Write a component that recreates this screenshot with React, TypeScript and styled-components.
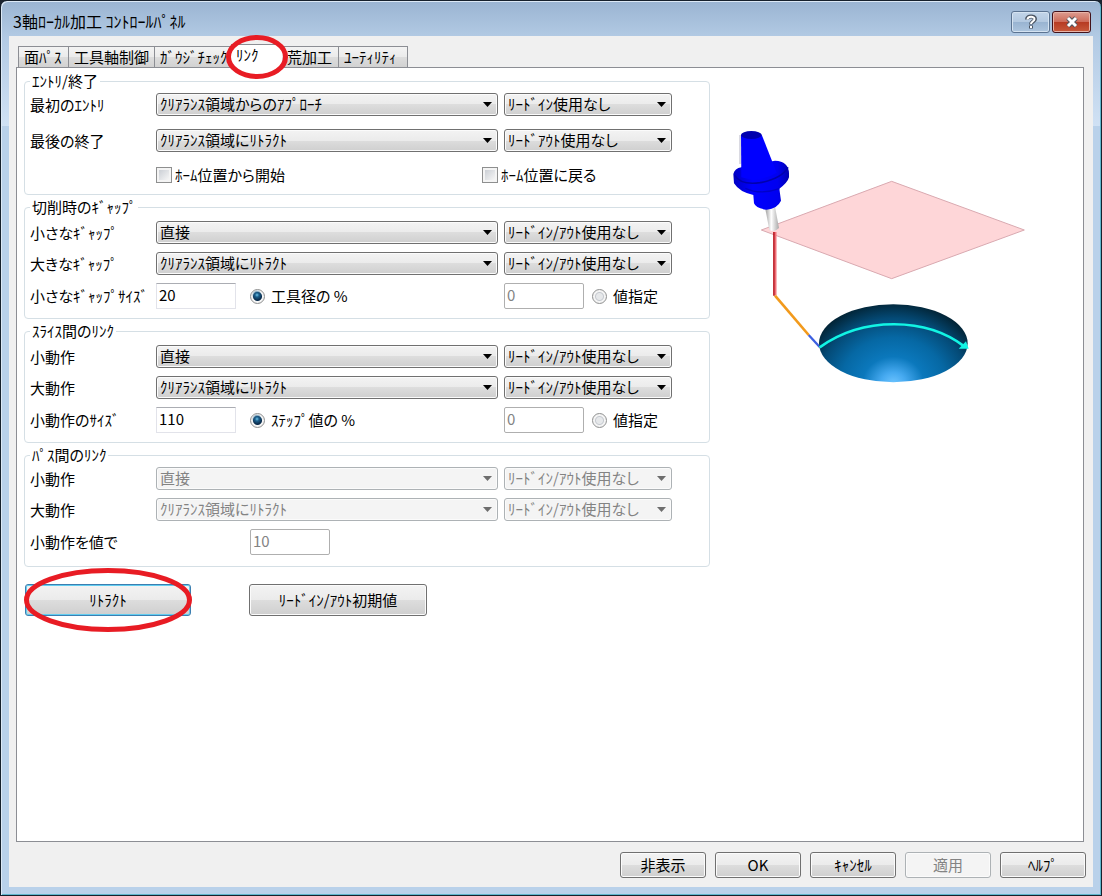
import React from "react";
import styled, { createGlobalStyle, css } from "styled-components";

const GlobalStyle = createGlobalStyle`
  *, *::before, *::after { box-sizing: border-box; }
  body { margin: 0; background: #1b2430; }
  body, button, input, select {
    font-family: "Noto Sans CJK JP", "Liberation Sans", sans-serif;
    font-size: 15px;
    line-height: 20px;
    font-feature-settings: "palt";
    color: #000;
  }
`;

const glossy = css`
  background: linear-gradient(#f3f3f3, #ebebeb 50%, #dddddd 50%, #cfcfcf);
  border: 1px solid #707070;
  border-radius: 3px;
  box-shadow: inset 0 0 0 1px #fbfbfb;
`;

const disabledLook = css`
  background: #f4f4f4;
  border-color: #adb2b5;
  color: #838383;
  opacity: 1;
`;

const Window = styled.div`
  display: flex;
  flex-direction: column;
  min-height: 100vh;
  padding: 0 8px 8px;
  border: 1px solid #16202c;
  border-radius: 7px 7px 0 0;
  background: linear-gradient(#9ab4d2, #b2cae4 36px, #d0e1f4 125px, #b9d1ea 125px);
  box-shadow: inset 1px 1px 0 #dce9f6, inset -1px -1px 0 #5fb6cc;
`;

const TitleBar = styled.header`
  display: flex;
  align-items: center;
  height: 35px;
  padding: 4px 2px 0 4px;
`;

const Title = styled.h1`
  flex: 1;
  margin: 0;
  font-size: 16px;
  font-weight: 400;
`;

const Captions = styled.div`
  display: flex;
  gap: 2px;
  padding-top: 2px;
`;

const CaptionButton = styled.button<{ $close?: boolean }>`
  display: grid;
  place-items: center;
  width: 39px;
  height: 22px;
  padding: 0;
  border: 1px solid ${(p) => (p.$close ? "#43121a" : "#5b7391")};
  border-radius: 3px;
  background: ${(p) =>
    p.$close
      ? "linear-gradient(#dc9c90, #cd6a58 50%, #b63a22 50%, #c85a3c)"
      : "linear-gradient(#c3d5e9, #b2c8e0 50%, #98b3d1 50%, #adc5de)"};
  box-shadow: inset 0 0 0 1px ${(p) => (p.$close ? "#e8b4a8" : "#d5e3f1")};
`;

const Client = styled.main`
  display: flex;
  flex: 1;
  flex-direction: column;
  padding: 8px 7px 9px;
  background: #f0f0f0;
`;

const Tabs = styled.div`
  display: flex;
  align-items: flex-end;
  padding-left: 2px;
`;

const Tab = styled.button<{ $width: number; $active?: boolean }>`
  position: relative;
  width: ${(p) => p.$width}px;
  height: ${(p) => (p.$active ? 24 : 21)}px;
  margin-bottom: ${(p) => (p.$active ? -1 : 0)}px;
  z-index: ${(p) => (p.$active ? 1 : 0)};
  padding: 0 0 ${(p) => (p.$active ? 3 : 0)}px 5px;
  border: 1px solid #8c8e94;
  border-width: 1px ${(p) => (p.$active ? 0 : 1)}px 0 0;
  background: ${(p) => (p.$active ? "#fff" : "linear-gradient(#f3f3f3, #ebebeb 50%, #dddddd 50%, #d2d2d2)")};
  text-align: left;
  white-space: nowrap;
  &:first-child { border-left-width: 1px; }
`;

const Ring = styled.svg`
  position: absolute;
  left: 50%;
  top: 50%;
  transform: translate(-50%, -50%);
  overflow: visible;
  pointer-events: none;
`;

const Page = styled.section`
  display: flex;
  flex: 1;
  align-items: flex-start;
  margin-right: 2px;
  padding: 3px 7px;
  border: 1px solid #8c8e94;
  background: #fff;
`;

const Form = styled.form`
  display: flex;
  flex: 0 1 686px;
  flex-direction: column;
  gap: 2px;
  min-width: 0;
`;

const Group = styled.fieldset<{ $top: number; $bottom: number }>`
  min-width: 0;
  margin: 0;
  padding: ${(p) => p.$top}px 37px ${(p) => p.$bottom}px 5px;
  border: 1px solid #d5dfe5;
  border-radius: 4px;
`;

const Legend = styled.legend`
  height: 20px;
  padding: 0 2px;
`;

const Rows = styled.div<{ $gap: number }>`
  display: grid;
  grid-template-columns: 120px 342fr 168fr;
  align-items: center;
  gap: ${(p) => p.$gap}px 6px;
`;

const Label = styled.label`
  white-space: nowrap;
`;

const Combo = styled.span`
  display: block;
  position: relative;
  min-width: 0;
`;

const Select = styled.select`
  ${glossy}
  display: block;
  appearance: none;
  width: 100%;
  height: 23px;
  padding: 0 20px 2px 3px;
  &:disabled { ${disabledLook} }
`;

const Arrow = styled.svg<{ $disabled?: boolean }>`
  position: absolute;
  right: 6px;
  top: 9px;
  fill: ${(p) => (p.$disabled ? "#6d6d6d" : "#000")};
  pointer-events: none;
`;

const Field = styled.input`
  width: 80px;
  height: 26px;
  padding: 0 2px 4px;
  border: 1px solid #e2e3ea;
  border-top-color: #abadb3;
  background: #fff;
  &:disabled {
    border-color: #afafaf;
    border-radius: 2px;
    color: #838383;
  }
`;

const ValueCell = styled.div<{ $gap?: number; $indent?: number }>`
  display: flex;
  align-items: center;
  gap: ${(p) => p.$gap ?? 0}px;
  padding-left: ${(p) => p.$indent ?? 0}px;
`;

const Choice = styled.label<{ $gap: number }>`
  display: flex;
  align-items: center;
  gap: ${(p) => p.$gap}px;
  white-space: nowrap;
`;

const CheckRow = styled.div`
  display: grid;
  grid-column: 2 / 4;
  grid-template-columns: 326fr 190fr;
  height: 18px;
`;

const CheckBox = styled.input`
  appearance: none;
  width: 16px;
  height: 16px;
  margin: 0;
  border: 1px solid #8e8f8f;
  background: linear-gradient(135deg, #cbcfd5, #f6f6f6) content-box, #f4f4f4;
  padding: 2px;
`;

const Radio = styled.input`
  appearance: none;
  width: 15px;
  height: 15px;
  margin: 0;
  border: 1px solid #8e8f8f;
  border-radius: 50%;
  background: radial-gradient(circle, #e6e8ea 3px, #c6cad0 4px, #f4f4f4 5px);
  &:checked {
    background: radial-gradient(circle at 6px 5px, #6fc3e8 0, #1b5f8c 2px, transparent 5px),
      radial-gradient(circle, #0b2c4c 4px, #f4f4f4 5px);
  }
`;

const Actions = styled.div`
  display: flex;
  gap: 58px;
  padding: 15px 0 0 1px;
`;

const Button = styled.button<{ $width: number; $height: number; $default?: boolean }>`
  ${glossy}
  position: relative;
  width: ${(p) => p.$width}px;
  height: ${(p) => p.$height}px;
  padding: 0 0 1px;
  white-space: nowrap;
  ${(p) =>
    p.$default &&
    css`
      border-color: #3c7fb1;
      box-shadow: inset 0 0 0 1px #62cdf0;
    `}
  &:disabled { ${disabledLook} }
`;

const Picture = styled.svg`
  flex: 0 1 320px;
  min-width: 0;
  margin: 49px 0 0 10px;
`;

const Footer = styled.footer`
  display: flex;
  justify-content: flex-end;
  gap: 9px;
  padding-top: 10px;
`;

function Oval({ width, height }: { width: number; height: number }) {
  return (
    <Ring width={width} height={height} aria-hidden="true">
      <ellipse cx={width / 2} cy={height / 2} rx={width / 2 - 3} ry={height / 2 - 3} fill="none" stroke="#e81c24" strokeWidth="5" />
    </Ring>
  );
}

function ComboBox({ id, label, value, disabled }: { id?: string; label?: string; value: string; disabled?: boolean }) {
  return (
    <Combo>
      <Select id={id} aria-label={label} disabled={disabled} defaultValue={value}>
        <option>{value}</option>
      </Select>
      <Arrow width="9" height="5" viewBox="0 0 9 5" $disabled={disabled} aria-hidden="true">
        <path d="M0 0H9L4.500 5Z" />
      </Arrow>
    </Combo>
  );
}

type LinkRow = { id: string; label: string; motion: string; lead: string };

function LinkRows({ rows, disabled }: { rows: LinkRow[]; disabled?: boolean }) {
  return (
    <>
      {rows.map((r) => (
        <React.Fragment key={r.id}>
          <Label htmlFor={r.id}>{r.label}</Label>
          <ComboBox id={r.id} value={r.motion} disabled={disabled} />
          <ComboBox label={r.label + " " + r.lead} value={r.lead} disabled={disabled} />
        </React.Fragment>
      ))}
    </>
  );
}

function SizeRow({ id, label, value, unit }: { id: string; label: string; value: string; unit: string }) {
  return (
    <>
      <Label htmlFor={id}>{label}</Label>
      <ValueCell $gap={14}>
        <Field id={id} defaultValue={value} />
        <Choice $gap={6}>
          <Radio type="radio" name={id + "-mode"} defaultChecked />
          {unit}
        </Choice>
      </ValueCell>
      <ValueCell $gap={8}>
        <Field aria-label="値指定" defaultValue="0" disabled />
        <Choice $gap={6}>
          <Radio type="radio" name={id + "-mode"} />
          値指定
        </Choice>
      </ValueCell>
    </>
  );
}

function ToolPathPicture() {
  return (
    <Picture width="320" height="270" viewBox="0 0 960 810" role="img">
      <defs>
        <radialGradient id="dome" gradientUnits="userSpaceOnUse" cx="520" cy="790" r="250" gradientTransform="translate(520 790) scale(1.150 1) translate(-520 -790)">
          <stop offset="0" stopColor="#6cc4ff" />
          <stop offset="0.130" stopColor="#45a9f0" />
          <stop offset="0.320" stopColor="#0b78bc" />
          <stop offset="0.550" stopColor="#0668a4" />
          <stop offset="0.780" stopColor="#044a76" />
          <stop offset="1" stopColor="#02202f" />
        </radialGradient>
        <linearGradient id="shank">
          <stop offset="0" stopColor="#9a9a9a" />
          <stop offset="0.450" stopColor="#ffffff" />
          <stop offset="1" stopColor="#a8a8a8" />
        </linearGradient>
        <linearGradient id="holder">
          <stop offset="0" stopColor="#0000c4" />
          <stop offset="0.350" stopColor="#0000ff" />
          <stop offset="0.800" stopColor="#0000f0" />
          <stop offset="1" stopColor="#0000b0" />
        </linearGradient>
      </defs>
      <path d="M515 184L913 330L515 476L124 330Z" fill="#fed6d8" stroke="#d9a9b0" strokeWidth="3" />
      <path d="M135 262L165 260L177 324Q164 338 148 330Z" fill="url(#shank)" />
      <path d="M60 45V132" stroke="#b5b5c4" strokeWidth="3" />
      <path d="M40 162Q44 145 64 142L165 122Q206 124 207 160V172Q203 188 178 206L183 242Q172 266 140 269Q108 266 102 250L100 225Q58 216 42 190Z" fill="url(#holder)" />
      <path d="M44 166Q62 196 120 188Q185 176 204 142" fill="none" stroke="#0000ae" strokeWidth="5" />
      <path d="M63 44L64 172Q115 190 170 158L125 44Z" fill="#0000ff" />
      <path d="M76 205Q122 226 178 206" fill="none" stroke="#0000c8" strokeWidth="4" />
      <ellipse cx="94" cy="45" rx="31" ry="12" fill="#0000ae" />
      <path d="M162 336V527" stroke="#b80a14" strokeWidth="5" />
      <path d="M167 336V525" stroke="#f07078" strokeWidth="5" />
      <path d="M165 527L266 645" stroke="#f29a1c" strokeWidth="8" />
      <path d="M266 645L299 681" stroke="#3c5fe0" strokeWidth="7" />
      <ellipse cx="520" cy="670" rx="223" ry="117" fill="url(#dome)" />
      <path d="M299 682C430 588 620 592 734 680" fill="none" stroke="#12f4e4" strokeWidth="8" />
      <path d="M746 686L716 686L738 664Z" fill="#12f4e4" />
    </Picture>
  );
}

const tabs = [
  { name: "面ﾊﾟｽ", width: 51 },
  { name: "工具軸制御", width: 86 },
  { name: "ｶﾞｳｼﾞﾁｪｯｸ", width: 76 },
  { name: "ﾘﾝｸ", width: 51, active: true },
  { name: "荒加工", width: 57 },
  { name: "ﾕｰﾃｨﾘﾃｨ", width: 69 },
];

const RETRACT = "ｸﾘｱﾗﾝｽ領域にﾘﾄﾗｸﾄ";
const NO_LEAD = "ﾘｰﾄﾞｲﾝ/ｱｳﾄ使用なし";

const entryRows: LinkRow[] = [
  { id: "first-entry", label: "最初のｴﾝﾄﾘ", motion: "ｸﾘｱﾗﾝｽ領域からのｱﾌﾟﾛｰﾁ", lead: "ﾘｰﾄﾞｲﾝ使用なし" },
  { id: "last-exit", label: "最後の終了", motion: RETRACT, lead: "ﾘｰﾄﾞｱｳﾄ使用なし" },
];

const gapRows: LinkRow[] = [
  { id: "small-gap", label: "小さなｷﾞｬｯﾌﾟ", motion: "直接", lead: NO_LEAD },
  { id: "large-gap", label: "大きなｷﾞｬｯﾌﾟ", motion: RETRACT, lead: NO_LEAD },
];

const moveRows = (prefix: string): LinkRow[] => [
  { id: prefix + "-small", label: "小動作", motion: "直接", lead: NO_LEAD },
  { id: prefix + "-large", label: "大動作", motion: RETRACT, lead: NO_LEAD },
];

export default function App() {
  return (
    <>
      <GlobalStyle />
      <Window>
        <TitleBar>
          <Title>3軸ﾛｰｶﾙ加工 ｺﾝﾄﾛｰﾙﾊﾟﾈﾙ</Title>
          <Captions>
            <CaptionButton aria-label="ﾍﾙﾌﾟ">
              <svg width="12" height="16" viewBox="0 0 12 16" fill="none" aria-hidden="true">
                <path d="M2 5.500C2 1.500 10 1.500 10 5C10 7.500 6 7.500 6 10.500M6 11.500V14.500" stroke="#4a5360" strokeWidth="4" />
                <path d="M2.500 5.500C2.500 2 9.500 2 9.500 5C9.500 7.500 6 7.500 6 10M6 12V14" stroke="#fff" strokeWidth="2" />
              </svg>
            </CaptionButton>
            <CaptionButton $close aria-label="閉じる">
              <svg width="14" height="12" viewBox="0 0 14 12" fill="none" aria-hidden="true">
                <path d="M3 2L11 10M11 2L3 10" stroke="#53565f" strokeWidth="5" />
                <path d="M3 2L11 10M11 2L3 10" stroke="#fff" strokeWidth="3" />
              </svg>
            </CaptionButton>
          </Captions>
        </TitleBar>
        <Client>
          <Tabs role="tablist">
            {tabs.map((t) => (
              <Tab key={t.name} role="tab" aria-selected={!!t.active} $width={t.width} $active={t.active}>
                {t.name}
                {t.active && <Oval width={63} height={45} />}
              </Tab>
            ))}
          </Tabs>
          <Page>
            <Form>
              <Group $top={2} $bottom={11}>
                <Legend>ｴﾝﾄﾘ/終了</Legend>
                <Rows $gap={13}>
                  <LinkRows rows={entryRows} />
                  <CheckRow>
                    <Choice $gap={3}>
                      <CheckBox type="checkbox" />
                      ﾎｰﾑ位置から開始
                    </Choice>
                    <Choice $gap={3}>
                      <CheckBox type="checkbox" />
                      ﾎｰﾑ位置に戻る
                    </Choice>
                  </CheckRow>
                </Rows>
              </Group>
              <Group $top={4} $bottom={9}>
                <Legend>切削時のｷﾞｬｯﾌﾟ</Legend>
                <Rows $gap={8}>
                  <LinkRows rows={gapRows} />
                  <SizeRow id="gap-size" label="小さなｷﾞｬｯﾌﾟｻｲｽﾞ" value="20" unit="工具径の %" />
                </Rows>
              </Group>
              <Group $top={4} $bottom={9}>
                <Legend>ｽﾗｲｽ間のﾘﾝｸ</Legend>
                <Rows $gap={8}>
                  <LinkRows rows={moveRows("slice")} />
                  <SizeRow id="move-size" label="小動作のｻｲｽﾞ" value="110" unit="ｽﾃｯﾌﾟ値の %" />
                </Rows>
              </Group>
              <Group $top={2} $bottom={11}>
                <Legend>ﾊﾟｽ間のﾘﾝｸ</Legend>
                <Rows $gap={8}>
                  <LinkRows rows={moveRows("pass")} disabled />
                  <Label htmlFor="pass-value">小動作を値で</Label>
                  <ValueCell $indent={94}>
                    <Field id="pass-value" defaultValue="10" disabled />
                  </ValueCell>
                </Rows>
              </Group>
              <Actions>
                <Button type="button" $width={166} $height={32} $default>
                  ﾘﾄﾗｸﾄ
                  <Oval width={169} height={65} />
                </Button>
                <Button type="button" $width={178} $height={32}>
                  ﾘｰﾄﾞｲﾝ/ｱｳﾄ初期値
                </Button>
              </Actions>
            </Form>
            <ToolPathPicture />
          </Page>
          <Footer>
            <Button $width={86} $height={26}>非表示</Button>
            <Button $width={86} $height={26}>OK</Button>
            <Button $width={86} $height={26}>ｷｬﾝｾﾙ</Button>
            <Button $width={86} $height={26} disabled>適用</Button>
            <Button $width={86} $height={26}>ﾍﾙﾌﾟ</Button>
          </Footer>
        </Client>
      </Window>
    </>
  );
}
